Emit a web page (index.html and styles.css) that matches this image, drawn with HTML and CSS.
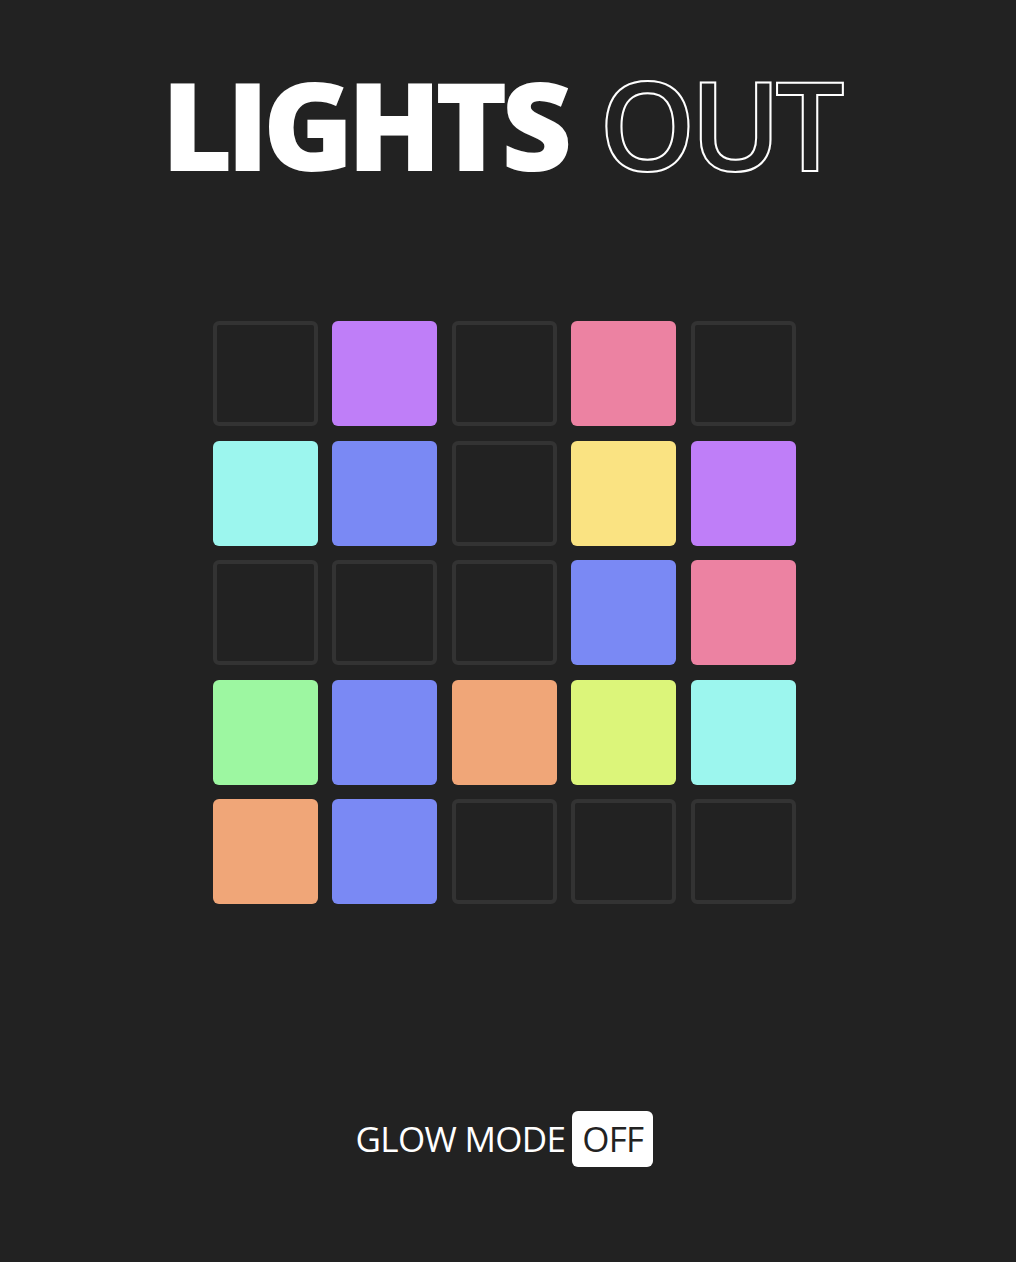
FILE: index.html
```html
<!DOCTYPE html>
<html>
<head>
<meta charset="utf-8">
<link rel="stylesheet" href="styles.css">
</head>
<body>
<main class="page">
  <h1 class="title"><span class="solid">LIGHTS</span> <span class="outline">OUT</span></h1>
  <div class="board">
    <div class="cell off"></div><div class="cell purple"></div><div class="cell off"></div><div class="cell pink"></div><div class="cell off"></div>
    <div class="cell cyan"></div><div class="cell blue"></div><div class="cell off"></div><div class="cell yellow"></div><div class="cell purple"></div>
    <div class="cell off"></div><div class="cell off"></div><div class="cell off"></div><div class="cell blue"></div><div class="cell pink"></div>
    <div class="cell green"></div><div class="cell blue"></div><div class="cell orange"></div><div class="cell lime"></div><div class="cell cyan"></div>
    <div class="cell orange"></div><div class="cell blue"></div><div class="cell off"></div><div class="cell off"></div><div class="cell off"></div>
  </div>
  <div class="glow">GLOW MODE <span class="toggle">OFF</span></div>
</main>
</body>
</html>
```

FILE: styles.css
```css
html, body {
  margin: 0;
  padding: 0;
  background: #222222;
}
.page {
  width: 1016px;
  height: 1262px;
  display: flex;
  flex-direction: column;
  align-items: center;
  font-family: "Open Sans", "Noto Sans", sans-serif;
  color: #ffffff;
}
.title {
  margin: 54px 16px 0 0;
  font-size: 123px;
  line-height: 140px;
  height: 140px;
  font-weight: 800;
  letter-spacing: -6.5px;
  word-spacing: 8px;
  white-space: nowrap;
}
.outline {
  color: transparent;
  -webkit-text-stroke: 2px #ffffff;
  font-weight: 600;
  letter-spacing: -6px;
}
.board {
  margin: 127px 8px 0 0;
  display: grid;
  grid-template-columns: repeat(5, 105px);
  grid-auto-rows: 105px;
  gap: 14.5px;
}
.cell {
  box-sizing: border-box;
  border-radius: 6px;
}
.off { border: 4px solid #333333; }
.purple { background: #bf7ef8; }
.pink { background: #ec82a2; }
.cyan { background: #9cf6ee; }
.blue { background: #7a89f4; }
.yellow { background: #fae382; }
.green { background: #9df7a1; }
.orange { background: #f0a678; }
.lime { background: #dcf57a; }
.glow {
  margin: 207px 7px 0 0;
  font-size: 35px;
  line-height: 56px;
  font-weight: 400;
  letter-spacing: -0.7px;
  display: flex;
  align-items: center;
  gap: 7px;
}
.toggle {
  background: #ffffff;
  color: #222222;
  border-radius: 6px;
  padding: 0 10px;
  height: 56px;
  display: inline-flex;
  align-items: center;
}
```
